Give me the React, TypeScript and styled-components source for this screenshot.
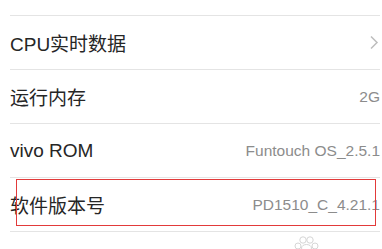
import React from 'react';
import styled, { createGlobalStyle } from 'styled-components';

const GlobalStyle = createGlobalStyle`
	html, body {
		margin: 0;
		padding: 0;
		background: #ffffff;
		overflow: hidden;
	}
	body {
		font-family: "Liberation Sans", "Noto Sans CJK SC", sans-serif;
	}
`;

const Screen = styled.div`
	width: 382px;
	height: 249px;
	overflow: hidden;
	background: #ffffff;
`;

const List = styled.div`
	display: flex;
	flex-direction: column;
	margin-top: -38px;
`;

const Row = styled.div<{ $lift?: boolean }>`
	position: relative;
	display: flex;
	align-items: center;
	justify-content: space-between;
	height: 54px;
	margin: 0 2px 0 10px;
	padding-bottom: ${(p) => (p.$lift ? '6px' : '0')};
	box-sizing: border-box;
	border-bottom: 1px solid #e4e4e4;
`;

const Label = styled.span`
	font-size: 19px;
	color: #262626;
	white-space: nowrap;
`;

const Value = styled.span`
	font-size: 15.5px;
	color: #8c8c8c;
	white-space: nowrap;
`;

const Chevron = styled.svg`
	width: 10px;
	height: 15px;
	margin-right: 1px;
`;

const Highlight = styled.div`
	position: absolute;
	top: 1px;
	left: 6px;
	right: 4px;
	height: 45px;
	border: 1px solid #e23a3a;
	pointer-events: none;
`;

const Watermark = styled.svg`
	position: absolute;
	left: 284px;
	top: 3px;
	width: 26px;
	height: 16px;
`;

type Item = {
	label: string;
	value?: string;
	arrow?: boolean;
	marked?: boolean;
	mark?: boolean;
	lift?: boolean;
};

const items: Item[] = [
	{ label: '处理器', value: '八核 1.7GHz', lift: true },
	{ label: 'CPU实时数据', arrow: true },
	{ label: '运行内存', value: '2G' },
	{ label: 'vivo ROM', value: 'Funtouch OS_2.5.1' },
	{ label: '软件版本号', value: 'PD1510_C_4.21.1', marked: true },
	{ label: '基带版本', value: 'MOLY.LR9.W1444', mark: true },
];

const App: React.FC = () => {
	return (
		<Screen>
			<GlobalStyle />
			<List>
				{items.map((it) => (
					<Row key={it.label} $lift={it.lift}>
						<Label>{it.label}</Label>
						{it.arrow ? (
							<Chevron viewBox="0 0 10 15">
								<path d="M2 1.5 L8 7.5 L2 13.5" fill="none" stroke="#bdbdbd" strokeWidth="1.5" />
							</Chevron>
						) : (
							<Value>{it.value}</Value>
						)}
						{it.marked && <Highlight />}
						{it.mark && (
							<Watermark viewBox="0 0 26 16">
								<g fill="none" stroke="#d6d6d6" strokeWidth="1">
									<circle cx="9" cy="5" r="3.2" />
									<circle cx="16" cy="5" r="3.2" />
									<circle cx="4" cy="11" r="3" />
									<circle cx="21" cy="11" r="3" />
									<ellipse cx="12.5" cy="13" rx="5" ry="3.5" />
								</g>
							</Watermark>
						)}
					</Row>
				))}
			</List>
		</Screen>
	);
};

export default App;
